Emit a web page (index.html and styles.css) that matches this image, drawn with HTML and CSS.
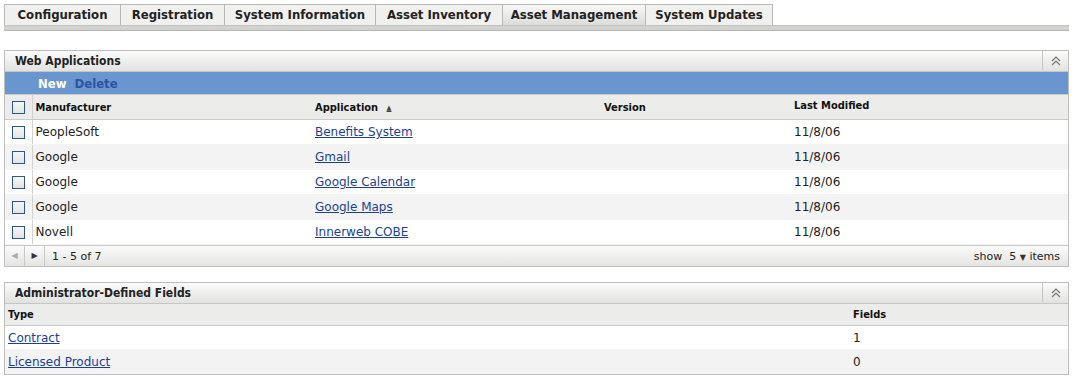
FILE: index.html
```html
<!DOCTYPE html>
<html lang="en">
<head>
  <meta charset="UTF-8" />
  <title>Asset Management</title>
  <link rel="stylesheet" href="styles.css">
</head>
<body>
  <!-- top tabs -->
  <nav class="tabs">
    <div class="tab-row">
      <a class="tab w-config">Configuration</a>
      <a class="tab w-reg">Registration</a>
      <a class="tab w-sysinfo">System Information</a>
      <a class="tab w-inv">Asset Inventory</a>
      <a class="tab w-mgmt active">Asset Management</a>
      <a class="tab w-upd">System Updates</a>
    </div>
    <div class="tab-bar"></div>
  </nav>

  <!-- web applications -->
  <section class="panel">
    <div class="panel-head">
      <span class="panel-title">Web Applications</span>
      <span class="collapse">
        <svg width="12" height="12" viewBox="0 0 12 12"><path d="M2 6 L6 2 L10 6 M2 10 L6 6 L10 10" fill="none" stroke="#777" stroke-width="1.2"/></svg>
      </span>
    </div>
    <div class="toolbar">
      <a class="tool new">New</a>
      <a class="tool del">Delete</a>
    </div>
    <table class="grid apps">
      <colgroup>
        <col class="c-check"><col class="c-man"><col class="c-app"><col class="c-ver"><col>
      </colgroup>
      <thead>
        <tr>
          <th class="chk"><span class="box"></span></th>
          <th>Manufacturer</th>
          <th>Application <span class="sort">&#9650;</span></th>
          <th class="ver">Version</th>
          <th class="mod">Last Modified</th>
        </tr>
      </thead>
      <tbody>
        <tr><td class="chk"><span class="box"></span></td><td>PeopleSoft</td><td><a href="#">Benefits System</a></td><td></td><td>11/8/06</td></tr>
        <tr><td class="chk"><span class="box"></span></td><td>Google</td><td><a href="#">Gmail</a></td><td></td><td>11/8/06</td></tr>
        <tr><td class="chk"><span class="box"></span></td><td>Google</td><td><a href="#">Google Calendar</a></td><td></td><td>11/8/06</td></tr>
        <tr><td class="chk"><span class="box"></span></td><td>Google</td><td><a href="#">Google Maps</a></td><td></td><td>11/8/06</td></tr>
        <tr><td class="chk"><span class="box"></span></td><td>Novell</td><td><a href="#">Innerweb COBE</a></td><td></td><td>11/8/06</td></tr>
      </tbody>
    </table>
    <div class="pager">
      <span class="pg-btn off">&#9664;</span>
      <span class="pg-btn">&#9654;</span>
      <span class="pg-text">1 - 5 of 7</span>
      <span class="pg-show">show&nbsp; 5 <span class="caret">&#9660;</span> items</span>
    </div>
  </section>

  <!-- admin fields -->
  <section class="panel">
    <div class="panel-head">
      <span class="panel-title">Administrator-Defined Fields</span>
      <span class="collapse">
        <svg width="12" height="12" viewBox="0 0 12 12"><path d="M2 6 L6 2 L10 6 M2 10 L6 6 L10 10" fill="none" stroke="#777" stroke-width="1.2"/></svg>
      </span>
    </div>
    <table class="grid fields">
      <colgroup><col class="c-type"><col></colgroup>
      <thead><tr><th>Type</th><th>Fields</th></tr></thead>
      <tbody>
        <tr><td><a href="#">Contract</a></td><td>1</td></tr>
        <tr><td><a href="#">Licensed Product</a></td><td>0</td></tr>
      </tbody>
    </table>
  </section>
</body>
</html>
```

FILE: styles.css
```css
body {
  margin: 4px 3px 0 4px;
  font-family: "DejaVu Sans", Verdana, sans-serif;
  font-size: 12px;
  color: #222;
  background: #fff;
}

a { color: #1b3f95; }

/* tabs */
.tabs { margin-bottom: 19px; }

.tab-row { display: flex; }

.tab {
  height: 20px;
  line-height: 20px;
  border: 1px solid #b9b9b9;
  border-bottom: none;
  border-left: none;
  background: #f0f0ee;
  font-family: "DejaVu Sans Condensed", "DejaVu Sans", sans-serif;
  font-weight: bold;
  font-size: 13px;
  color: #222;
  text-align: center;
}
.tab:first-child { border-left: 1px solid #b9b9b9; }
.tab.active { background: linear-gradient(#f8f8f6, #dcdcda); }

.w-config  { width: 115px; }
.w-reg     { width: 103px; }
.w-sysinfo { width: 150px; }
.w-inv     { width: 126px; }
.w-mgmt    { width: 142px; }
.w-upd     { width: 126px; }

.tab-bar {
  height: 4px;
  background: #d2d2d0;
  border-top: 1px solid #c2c2c0;
  border-bottom: 1px solid #b5b5b3;
  margin-right: -3px;
}

/* panels */
.panel {
  border: 1px solid #bdbdbd;
  margin-bottom: 15px;
}

.panel-head {
  display: flex;
  align-items: stretch;
  height: 20px;
  border-bottom: 1px solid #c6c6c6;
  background: linear-gradient(#fbfbfb, #e2e2e0);
}

.panel-title {
  flex: 1;
  padding-left: 10px;
  line-height: 20px;
  font-family: "DejaVu Sans Condensed", "DejaVu Sans", sans-serif;
  font-weight: bold;
  font-size: 12px;
  color: #222;
}

.collapse {
  width: 25px;
  border-left: 1px solid #c6c6c6;
  display: flex;
  align-items: center;
  justify-content: center;
}

.toolbar {
  height: 22px;
  background: #6a96cf;
  display: flex;
  align-items: center;
  gap: 8px;
  padding-left: 33px;
  font-family: "DejaVu Sans Condensed", "DejaVu Sans", sans-serif;
  font-weight: bold;
  font-size: 13px;
}
.tool { text-decoration: none; }
.tool.new { color: #fff; }
.tool.del { color: #2c55a0; }

/* grids */
.grid {
  width: 100%;
  border-collapse: collapse;
  table-layout: fixed;
}

.grid th {
  background: #ececea;
  text-align: left;
  font-family: "DejaVu Sans Condensed", "DejaVu Sans", sans-serif;
  font-weight: bold;
  font-size: 11px;
  color: #111;
  height: 24px;
  padding: 0 3px;
  border-top: 1px solid #c9c9c9;
  border-bottom: 1px solid #c9c9c9;
}

.grid td {
  height: 24px;
  padding: 0 3px;
  border-bottom: 1px solid #f4f4f4;
}
.grid tbody tr:nth-child(even) td { background: #f3f3f3; }

.grid .chk {
  text-align: center;
  border-right: 1px solid #d2d2d2;
  padding: 0;
}

.box {
  display: inline-block;
  width: 11px;
  height: 11px;
  border: 1px solid #2f5784;
  background: linear-gradient(#f6f6f6, #e4e4e4);
  vertical-align: middle;
}

.c-check { width: 27px; }
.c-man   { width: 280px; }
.c-app   { width: 288px; }
.c-ver   { width: 191px; }

.grid th.ver { padding-left: 4px; }
.grid th.mod { vertical-align: top; padding-top: 4px; height: 20px; }

.sort {
  font-size: 7px;
  color: #444;
  margin-left: 5px;
  vertical-align: middle;
  text-decoration: underline;
}

/* pager */
.pager {
  display: flex;
  align-items: center;
  height: 20px;
  border-top: 1px solid #c9c9c9;
  background: linear-gradient(#fbfbfb, #e4e4e2);
  font-size: 11px;
}
.pg-btn {
  width: 19px;
  height: 20px;
  line-height: 20px;
  text-align: center;
  font-size: 8px;
  color: #333;
  border-right: 1px solid #c9c9c9;
}
.pg-btn.off { color: #aaa; }
.pg-text { padding-left: 7px; flex: 1; }
.pg-show { padding-right: 8px; }
.caret { font-size: 8px; color: #333; }

.c-type { width: 845px; }
.fields th, .fields td { padding-left: 3px; }
.fields th { height: 21px; border-top: none; }
.fields td { height: 23px; }
```
